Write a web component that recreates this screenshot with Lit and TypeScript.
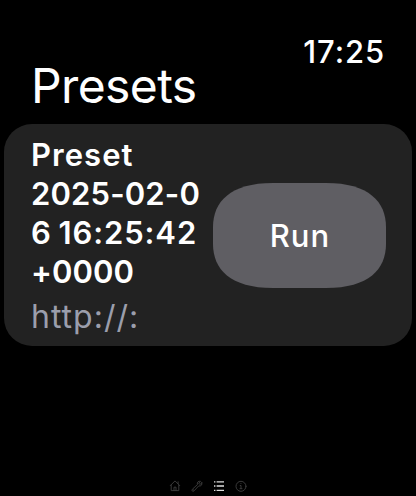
import { LitElement, html, css } from "lit";
import { customElement, property } from "lit/decorators.js";

@customElement("preset-card")
class PresetCard extends LitElement {
  @property({ attribute: false }) lines: string[] = [];
  @property() address = "";

  static styles = css`
    :host {
      display: flex;
      box-sizing: border-box;
      height: 222px;
      margin: 0 4px;
      padding: 11px 26px 0 27px;
      border-radius: 28px;
      background: #222222;
      justify-content: space-between;
    }
    .name {
      font-size: 31px;
      font-weight: 600;
      line-height: 39px;
      white-space: nowrap;
    }
    .name span { display: block; }
    .word { letter-spacing: 1.05px; }
    .date { letter-spacing: 0.15px; }
    .time { letter-spacing: 0.9px; word-spacing: -2px; }
    .zone { letter-spacing: 0.1px; }
    .address {
      margin-top: 6px;
      font-size: 32px;
      line-height: 39px;
      letter-spacing: 1px;
      color: #9b9eac;
    }
    .run {
      flex: none;
      width: 173px;
      height: 105px;
      margin: 48px 0 0;
      padding: 0 0 0 1px;
      border: 0;
      clip-path: path("M0 44C0 19 17 0 60 0H113C156 0 173 19 173 44V61C173 86 156 105 113 105H60C17 105 0 86 0 61Z");
      background: #5f5e63;
      color: #fff;
      font: 500 31px Inter, sans-serif;
      letter-spacing: 1.1px;
    }
    .details { width: 169px; }
  `;

  render() {
    const kinds = ["word", "date", "time", "zone"];
    return html`
      <div class="details">
        <div class="name">
          ${this.lines.map((line, i) => html`<span class=${kinds[i]}>${line}</span>`)}
        </div>
        <div class="address">${this.address}</div>
      </div>
      <button class="run">Run</button>
    `;
  }
}

@customElement("app-root")
class AppRoot extends LitElement {
  static styles = css`
    :host {
      display: flex;
      flex-direction: column;
      width: 416px;
      height: 496px;
      background: #000;
      color: #fff;
      font-family: Inter, sans-serif;
      overflow: hidden;
    }
    header {
      display: flex;
      justify-content: space-between;
      box-sizing: border-box;
      height: 124px;
      padding: 0 31px 0 30px;
    }
    h1 {
      margin: 57px 0 0 1px;
      font-size: 48px;
      font-weight: 400;
      line-height: 58px;
      letter-spacing: -0.6px;
    }
    time {
      margin-top: 32px;
      font-size: 31px;
      font-weight: 500;
      line-height: 40px;
      letter-spacing: 0.9px;
    }
    nav {
      display: flex;
      justify-content: center;
      gap: 10px;
      margin-top: 134px;
    }
    svg {
      display: block;
      width: 12px;
      height: 12px;
      fill: none;
      stroke: #404040;
      stroke-width: 0.9;
      stroke-linecap: round;
      stroke-linejoin: round;
    }
    .active { stroke: #dedede; stroke-width: 1.3; stroke-linecap: butt; }
  `;

  render() {
    return html`
      <header><h1>Presets</h1><time>17:25</time></header>
      <preset-card
        .lines=${["Preset", "2025-02-0", "6 16:25:42", "+0000"]}
        address="http://:"
      ></preset-card>
      <nav>
        <svg viewBox="0 0 12 12"><path d="M1.3 5.6 6 .9 10.7 5.6M2.2 5v5.6h7.6V5M5 10.6V7.2h2v3.4M9.1 3.6V1.8" /></svg>
        <svg viewBox="0 0 12 12"><path d="M10.8 2.7 9 4.5 7.7 3.2 9.5 1.4C7.5.6 5.8 2.3 6.4 4.6L1.3 9.3C.3 10.7 1.8 12 3 10.9L7.7 5.9C10 6.5 11.6 4.7 10.8 2.7ZM2.3 9.9h.1" /></svg>
        <svg class="active" viewBox="0 0 12 12"><path d="M1 1.8h1.4M3.6 1.8H11M1 6h1.4M3.6 6H11M1 10.3h1.4M3.6 10.3H11" /></svg>
        <svg viewBox="0 0 12 12"><circle cx="6" cy="6.3" r="5" /><path d="M5.9 3.5h.1M5.2 5.5H6v3M5 8.7h2" /></svg>
      </nav>
    `;
  }
}
